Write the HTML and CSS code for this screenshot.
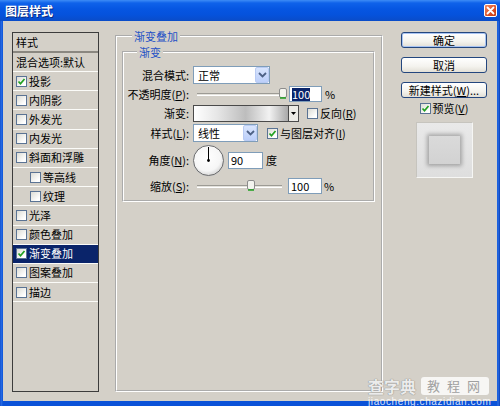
FILE: index.html
```html
<!DOCTYPE html>
<html lang="zh-CN">
<head>
<meta charset="utf-8">
<title>图层样式</title>
<link rel="stylesheet" href="styles.css">
</head>
<body>
<div class="window">
  <div class="titlebar">
    <span class="title">图层样式</span>
    <span class="close"><svg width="11" height="11" viewBox="0 0 11 11"><path d="M2.5 2.5 L8.5 8.5 M8.5 2.5 L2.5 8.5" stroke="#fff" stroke-width="1.8" stroke-linecap="round"/></svg></span>
  </div>
  <div class="body">
    <div class="list">
      <div class="list-head">样式</div>
      <div class="list-row blend">混合选项:默认</div>
      <div class="list-row"><span class="cb"><svg viewBox="0 0 9 9"><path d="M1.5 4.5 L3.5 6.8 L7.5 2" fill="none" stroke="#21a121" stroke-width="1.7"/></svg></span>投影</div>
      <div class="list-row"><span class="cb"></span>内阴影</div>
      <div class="list-row"><span class="cb"></span>外发光</div>
      <div class="list-row"><span class="cb"></span>内发光</div>
      <div class="list-row"><span class="cb"></span>斜面和浮雕</div>
      <div class="list-row sub"><span class="cb"></span>等高线</div>
      <div class="list-row sub"><span class="cb"></span>纹理</div>
      <div class="list-row"><span class="cb"></span>光泽</div>
      <div class="list-row"><span class="cb"></span>颜色叠加</div>
      <div class="list-row selected"><span class="cb"><svg viewBox="0 0 9 9"><path d="M1.5 4.5 L3.5 6.8 L7.5 2" fill="none" stroke="#21a121" stroke-width="1.7"/></svg></span>渐变叠加</div>
      <div class="list-row"><span class="cb"></span>图案叠加</div>
      <div class="list-row"><span class="cb"></span>描边</div>
    </div>

    <fieldset class="group outer">
      <legend>渐变叠加</legend>
      <fieldset class="group inner">
        <legend>渐变</legend>
        <div class="frow h20">
          <span class="lbl">混合模式:</span>
          <div class="select w77"><span>正常</span><span class="sel-btn"><svg width="9" height="6" viewBox="0 0 9 6"><path d="M1 1 L4.5 4.5 L8 1" fill="none" stroke="#4d6185" stroke-width="1.8"/></svg></span></div>
        </div>
        <div class="frow h18">
          <span class="lbl">不透明度(<u>P</u>):</span>
          <div class="slider w90"><span class="track"></span><span class="thumb" style="left:82px"><svg width="8" height="11" viewBox="0 0 8 11"><rect x="0.5" y="0.5" width="7" height="9" rx="1.5" fill="#f4f4ef" stroke="#8c8c8c"/><path d="M1 10 H7" stroke="#21a121" stroke-width="1.5"/></svg></span></div>
          <div class="num w33"><span class="sel">100</span></div>
          <span class="unit">%</span>
        </div>
        <div class="frow h20">
          <span class="lbl">渐变:</span>
          <div class="grad"></div>
          <span class="grad-btn"><svg width="5" height="3" viewBox="0 0 5 3"><path d="M0 0 H5 L2.5 3 Z" fill="#000"/></svg></span>
          <span class="cb gap8"></span><span class="cb-text">反向(<u>R</u>)</span>
        </div>
        <div class="frow h20">
          <span class="lbl">样式(<u>L</u>):</span>
          <div class="select w65"><span>线性</span><span class="sel-btn"><svg width="9" height="6" viewBox="0 0 9 6"><path d="M1 1 L4.5 4.5 L8 1" fill="none" stroke="#4d6185" stroke-width="1.8"/></svg></span></div>
          <span class="cb gap9"><svg viewBox="0 0 9 9"><path d="M1.5 4.5 L3.5 6.8 L7.5 2" fill="none" stroke="#21a121" stroke-width="1.7"/></svg></span><span class="cb-text">与图层对齐(<u>I</u>)</span>
        </div>
        <div class="frow h34">
          <span class="lbl">角度(<u>N</u>):</span>
          <svg class="dial" width="33" height="33" viewBox="0 0 33 33">
            <defs><radialGradient id="dg" cx="0.45" cy="0.4" r="0.6"><stop offset="0" stop-color="#ffffff"/><stop offset="0.75" stop-color="#f6f6f6"/><stop offset="1" stop-color="#d8d8d8"/></radialGradient></defs>
            <circle cx="16.5" cy="16.5" r="15.8" fill="#c9c9c9"/>
            <circle cx="16.5" cy="16.5" r="15" fill="url(#dg)" stroke="#6e6e6e" stroke-width="1"/>
            <path d="M16.5 16.5 V3" stroke="#000" stroke-width="1"/>
            <circle cx="16.5" cy="16.5" r="1.4" fill="#000"/>
          </svg>
          <div class="num w35 gap3">90</div>
          <span class="unit deg">度</span>
        </div>
        <div class="frow h18">
          <span class="lbl">缩放(<u>S</u>):</span>
          <div class="slider w85"><span class="track"></span><span class="thumb" style="left:50px"><svg width="8" height="11" viewBox="0 0 8 11"><rect x="0.5" y="0.5" width="7" height="9" rx="1.5" fill="#f4f4ef" stroke="#8c8c8c"/><path d="M1 10 H7" stroke="#21a121" stroke-width="1.5"/></svg></span></div>
          <div class="num w34 gap6">100</div>
          <span class="unit u2">%</span>
        </div>
      </fieldset>
    </fieldset>

    <div class="actions">
      <div class="btn default">确定</div>
      <div class="btn">取消</div>
      <div class="btn last">新建样式(<u>W</u>)...</div>
      <div class="preview-toggle"><span class="cb"><svg viewBox="0 0 9 9"><path d="M1.5 4.5 L3.5 6.8 L7.5 2" fill="none" stroke="#21a121" stroke-width="1.7"/></svg></span><span class="cb-text">预览(<u>V</u>)</span></div>
      <div class="preview"><div class="preview-square"></div></div>
    </div>
  </div>
  <div class="watermark">
    <div class="wm-top"><span class="wm-brand">查字典</span><span class="wm-tag">教程网</span></div>
    <div class="wm-url">jiaocheng.chazidian.com</div>
  </div>
</div>
</body>
</html>
```
FILE: styles.css
```css
* { box-sizing: border-box; }
html, body { margin: 0; padding: 0; }
body {
  width: 500px;
  height: 406px;
  overflow: hidden;
  font-family: "Noto Sans CJK SC", "Liberation Sans", sans-serif;
  font-size: 11px;
  color: #000;
  background: #0b4fd4;
}
.window {
  position: relative;
  width: 500px;
  height: 406px;
  display: flex;
  flex-direction: column;
  background: linear-gradient(to right, #0a44c4 0, #2a6ee6 1px, #0b52d8 3px, #0b52d8 497px, #2a6ee6 498px, #0a3eb4 500px);
}
.titlebar {
  height: 21px;
  flex: none;
  display: flex;
  align-items: center;
  justify-content: space-between;
  padding: 0 3px 0 5px;
  background: linear-gradient(#3d8cf6 0, #0f62ea 3px, #0656e2 9px, #0552dc 15px, #0a4cc8 21px);
}
.title {
  color: #fff;
  font-weight: bold;
  font-size: 12px;
  line-height: 1;
  text-shadow: 1px 1px 0 #0a2a80;
}
.close {
  width: 13px;
  height: 13px;
  display: flex;
  align-items: center;
  justify-content: center;
  border: 1px solid #fff;
  border-radius: 2px;
  background: linear-gradient(135deg, #f08a64, #d6461c 70%, #c03a14);
}
.close svg { display: block; }
.body {
  flex: 1;
  margin: 0 3px 5px;
  background: #d4d0c8;
  display: flex;
  align-items: flex-start;
  padding: 11px 10px 9px 9px;
}

/* style list */
.list {
  width: 87px;
  height: 360px;
  flex: none;
  border: 1px solid #3c3c3c;
  margin-right: 16px;
}
.list-head {
  height: 20px;
  line-height: 18px;
  padding-left: 3px;
  border-bottom: 2px solid #8a8780;
}
.list-row {
  height: 19.2px;
  display: flex;
  align-items: center;
  padding-left: 3px;
  border-bottom: 1px solid #fbfbf8;
  line-height: 1;
  white-space: nowrap;
}
.list-row.blend { height: 19px; }
.list-row.sub { padding-left: 17px; }
.list-row.selected { background: #0a246a; color: #fff; }
.list-row .cb { margin-right: 2px; }

/* checkbox */
.cb {
  width: 11px;
  height: 11px;
  flex: none;
  display: inline-flex;
  align-items: center;
  justify-content: center;
  border: 1px solid #5a7394;
  background: linear-gradient(135deg, #dcdcd5, #ffffff 80%);
}
.cb svg { width: 9px; height: 9px; display: block; }
.cb-text { margin-left: 2px; white-space: nowrap; line-height: 1; }
.gap8 { margin-left: 8px; }
.gap9 { margin-left: 9px; }

/* group boxes */
.group {
  margin: 0;
  min-width: 0;
  border: 2px groove #ffffff;
}
.group legend {
  padding: 0 2px;
  color: #1f50c6;
  font-size: 11px;
  line-height: 12px;
}
.outer {
  width: 268px;
  height: 362px;
  flex: none;
  margin-top: -2px;
  margin-right: 18px;
  padding: 4px 6px 0 5px;
}
.outer > legend { margin-left: 10px; }
.inner {
  padding: 7px 0 5px 0;
}
.inner > legend { margin-left: 13px; }

.frow {
  display: flex;
  align-items: center;
  white-space: nowrap;
}
.h18 { height: 18px; }
.h20 { height: 20px; }
.h34 { height: 34px; }
.lbl {
  width: 65px;
  margin-right: 4px;
  text-align: right;
  line-height: 1;
  flex: none;
}

.select {
  height: 18px;
  display: flex;
  align-items: center;
  justify-content: space-between;
  border: 1px solid #7f9db9;
  background: #fff;
  padding-left: 4px;
  line-height: 1;
  flex: none;
}
.w77 { width: 77px; }
.w65 { width: 65px; }
.sel-btn {
  width: 14px;
  height: 16px;
  display: flex;
  align-items: center;
  justify-content: center;
  border: 1px solid #b9cbf3;
  border-radius: 2px;
  background: linear-gradient(#d9e5fd, #bccffa);
}
.sel-btn svg { display: block; }

.slider {
  position: relative;
  height: 12px;
  margin-left: 4px;
  flex: none;
}
.w90 { width: 90px; }
.w85 { width: 85px; }
.track {
  position: absolute;
  left: 0;
  right: 0;
  top: 5px;
  height: 3px;
  border-top: 1px solid #9d9b95;
  border-bottom: 1px solid #ffffff;
  background: #e4e2dc;
}
.thumb {
  position: absolute;
  top: 0;
  width: 8px;
  height: 11px;
}
.thumb svg { display: block; }

.num {
  height: 16px;
  border: 1px solid #7f9db9;
  background: #fff;
  padding-left: 2px;
  display: flex;
  align-items: center;
  line-height: 1;
  flex: none;
}
.w33 { width: 33px; margin-left: 2px; }
.w34 { width: 34px; }
.w35 { width: 35px; height: 17px; }
.gap3 { margin-left: 3px; }
.gap6 { margin-left: 6px; }
.sel { background: #0a246a; color: #fff; padding: 1px 0; }
.unit { margin-left: 3px; line-height: 1; }
.unit.u2 { margin-left: 2px; }
.dial { display: block; margin-left: -1px; flex: none; }

.grad {
  width: 96px;
  height: 17px;
  flex: none;
  border: 1px solid #4a4a4a;
  background: linear-gradient(to right, #ffffff 0%, #e6e6e6 25%, #bdbdbd 55%, #f2f2f2 80%, #a9a9a9 100%);
}
.grad-btn {
  width: 10px;
  height: 17px;
  flex: none;
  display: flex;
  align-items: center;
  justify-content: center;
  border: 1px solid #4a4a4a;
  border-left: none;
  background: #ecebe6;
}
.grad-btn svg { display: block; }

/* right column */
.actions {
  width: 86px;
  flex: none;
  display: flex;
  flex-direction: column;
}
.btn {
  height: 16px;
  line-height: 14px;
  text-align: center;
  border: 1px solid #23467e;
  border-radius: 3px;
  background: linear-gradient(#ffffff, #f4f3ee 60%, #e2dfd6);
  margin-bottom: 9px;
  white-space: nowrap;
}
.btn.default {
  box-shadow: inset 0 0 0 1px #a9c4f2;
}
.btn.last { margin-bottom: 3px; }
.preview-toggle {
  height: 15px;
  display: flex;
  align-items: center;
  justify-content: center;
}
.preview {
  width: 57px;
  height: 56px;
  margin: 6px auto 0;
  border: 1px solid;
  border-color: #c6c4be #f6f6f4 #f6f6f4 #c6c4be;
  background: linear-gradient(#e9e9e9, #dedede);
  display: flex;
  align-items: center;
  justify-content: center;
}
.preview-square {
  width: 31px;
  height: 28px;
  background: linear-gradient(#dadada, #d2d2d2);
  box-shadow: 0 0 4px 2px rgba(0, 0, 0, 0.28);
}

/* watermark overlay */
.watermark {
  position: absolute;
  left: 368px;
  top: 376px;
  width: 122px;
}
.wm-top {
  display: flex;
  align-items: center;
  height: 19px;
  white-space: nowrap;
}
.wm-brand {
  width: 51px;
  font-size: 16px;
  font-weight: bold;
  line-height: 1;
  color: rgba(255, 255, 255, 0.85);
  text-shadow: 0 0 1px #8a8a8a, 0 0 1px #8a8a8a;
}
.wm-tag {
  margin-left: 2px;
  width: 68px;
  height: 18px;
  border-radius: 3px;
  background: rgba(255, 255, 255, 0.8);
  color: #a0a0a0;
  font-size: 13px;
  line-height: 18px;
  letter-spacing: 7px;
  padding-left: 6px;
  overflow: hidden;
}
.wm-url {
  margin-top: 2px;
  font-family: "Liberation Sans", sans-serif;
  font-size: 10px;
  line-height: 10px;
  letter-spacing: 0.6px;
  color: rgba(255, 255, 255, 0.85);
  white-space: nowrap;
}
```
